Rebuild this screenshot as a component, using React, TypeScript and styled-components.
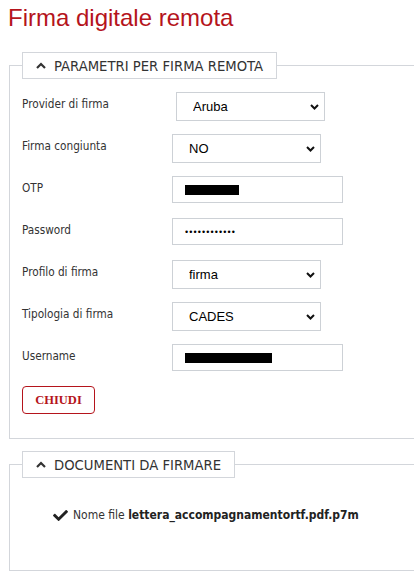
import React from 'react';
import styled, { createGlobalStyle } from 'styled-components';
import { FaCheck } from 'react-icons/fa';

const GlobalStyle = createGlobalStyle`
  html {
    overflow: hidden;
  }
  body {
    margin: 0 0 0 8px;
    background: #ffffff;
    font-family: "DejaVu Sans Condensed", "DejaVu Sans", sans-serif;
    font-stretch: condensed;
    color: #333333;
  }
`;

const Title = styled.h1`
  margin: 4px 0 0 0;
  font-family: "Liberation Sans", Arial, sans-serif;
  font-size: 24px;
  font-weight: normal;
  line-height: 28px;
  color: #b5141c;
`;

const Box = styled.fieldset<{ $top: number; $bottom: number }>`
  margin: ${(p) => p.$top}px 0 0 1px;
  box-sizing: border-box;
  min-width: 0;
  border: 1px solid #d3d6db;
  border-right: none;
  padding: 0 12px ${(p) => p.$bottom}px 12px;
`;

const Legend = styled.legend`
  display: flex;
  align-items: center;
  gap: 8px;
  height: 27px;
  box-sizing: border-box;
  border: 1px solid #d3d6db;
  padding: 0 13px 0 13px;
  margin: 0;
  font-size: 14.7px;
  color: #333333;
`;

const Caret = styled.svg`
  width: 10px;
  height: 7px;
`;

const Form = styled.div`
  margin-top: 13px;
`;

const Row = styled.div`
  display: grid;
  grid-template-columns: 150px auto;
  height: 42px;
  align-items: start;
`;

const Label = styled.label`
  font-size: 11.7px;
  line-height: 24px;
  color: #333333;
`;

const SelectWrap = styled.div<{ $shift?: number }>`
  position: relative;
  width: 149px;
  height: 29px;
  margin-left: ${(p) => p.$shift || 0}px;
`;

const Select = styled.select`
  appearance: none;
  width: 100%;
  height: 100%;
  box-sizing: border-box;
  border: 1px solid #cdd1d6;
  border-radius: 0;
  background: #ffffff;
  padding: 0 0 0 16px;
  font-family: "Liberation Sans", Arial, sans-serif;
  font-size: 13px;
  color: #000000;
  outline: none;
`;

const Arrow = styled.svg`
  position: absolute;
  right: 6px;
  top: 12px;
  width: 9px;
  height: 6px;
  pointer-events: none;
`;

const FieldBox = styled.div`
  display: flex;
  align-items: center;
  width: 171px;
  height: 27px;
  box-sizing: border-box;
  border: 1px solid #cdd1d6;
  background: #ffffff;
  padding: 0 12px;
`;

const Redacted = styled.span<{ $w: number }>`
  display: block;
  width: ${(p) => p.$w}px;
  height: 10px;
  margin-top: 1px;
  background: #000000;
`;

const PasswordInput = styled.input`
  width: 171px;
  height: 27px;
  box-sizing: border-box;
  border: 1px solid #cdd1d6;
  padding: 0 12px;
  font-family: "Liberation Sans", Arial, sans-serif;
  font-size: 9px;
  letter-spacing: 1.1px;
  color: #000000;
  outline: none;
`;

const CloseButton = styled.button`
  width: 73px;
  height: 28px;
  border: 1px solid #b5141c;
  border-radius: 4px;
  background: #ffffff;
  color: #b5141c;
  font-family: "Liberation Serif", "Times New Roman", serif;
  font-weight: bold;
  font-size: 12.5px;
  padding: 0;
`;

const FileLine = styled.div`
  display: flex;
  align-items: center;
  gap: 4px;
  margin: 28px 0 0 30px;
  font-size: 12px;
  line-height: 18px;
  color: #333333;
  svg {
    width: 17px;
    height: 15px;
    color: #222222;
  }
  b {
    color: #222222;
  }
`;

function SelectField({ value, options, shift }: { value: string; options: string[]; shift?: number }) {
  return (
    <SelectWrap $shift={shift}>
      <Select defaultValue={value}>
        {options.map((o) => (
          <option key={o}>{o}</option>
        ))}
      </Select>
      <Arrow viewBox="0 0 9 6">
        <path d="M1 1 L4.5 4.5 L8 1" fill="none" stroke="#111" strokeWidth="2" />
      </Arrow>
    </SelectWrap>
  );
}

function UpCaret() {
  return (
    <Caret viewBox="0 0 10 7">
      <path d="M1 6 L5 2 L9 6" fill="none" stroke="#333" strokeWidth="2.2" />
    </Caret>
  );
}

function App(): React.ReactElement {
  return (
    <>
      <GlobalStyle />
      <Title>Firma digitale remota</Title>
      <Box $top={20} $bottom={24}>
        <Legend>
          <UpCaret />
          PARAMETRI PER FIRMA REMOTA
        </Legend>
        <Form>
          <Row>
            <Label>Provider di firma</Label>
            <SelectField value="Aruba" options={['Aruba', 'Infocert']} shift={4} />
          </Row>
          <Row>
            <Label>Firma congiunta</Label>
            <SelectField value="NO" options={['NO', 'SI']} />
          </Row>
          <Row>
            <Label>OTP</Label>
            <FieldBox>
              <Redacted $w={54} />
            </FieldBox>
          </Row>
          <Row>
            <Label>Password</Label>
            <PasswordInput type="password" defaultValue="xxxxxxxxxxxx" />
          </Row>
          <Row>
            <Label>Profilo di firma</Label>
            <SelectField value="firma" options={['firma']} />
          </Row>
          <Row>
            <Label>Tipologia di firma</Label>
            <SelectField value="CADES" options={['CADES', 'PADES']} />
          </Row>
          <Row>
            <Label>Username</Label>
            <FieldBox>
              <Redacted $w={87} />
            </FieldBox>
          </Row>
          <CloseButton>CHIUDI</CloseButton>
        </Form>
      </Box>
      <Box $top={12} $bottom={46}>
        <Legend>
          <UpCaret />
          DOCUMENTI DA FIRMARE
        </Legend>
        <FileLine>
          <FaCheck />
          <span>
            Nome file <b>lettera_accompagnamentortf.pdf.p7m</b>
          </span>
        </FileLine>
      </Box>
    </>
  );
}

export default App;
